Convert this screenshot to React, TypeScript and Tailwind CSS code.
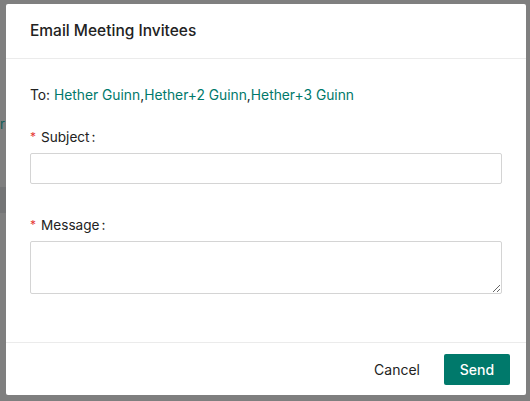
export default function App() {
  const invitees = ['Hether Guinn', 'Hether+2 Guinn', 'Hether+3 Guinn']

  return (
    <div className="relative h-[401px] w-[530px] overflow-hidden bg-[#7f7f7f] font-['Inter',sans-serif]">
      {/* page content peeking out from behind the overlay */}
      <span className="absolute left-0 top-[114px] text-[13px] leading-[20px] text-[#0b5c56]">r</span>
      <div className="absolute left-0 top-[187px] h-[26px] w-[6px] bg-[#747576]" />

      <div className="absolute left-[6px] top-[4px] flex h-[391px] w-[520px] flex-col rounded-[2px] bg-white">
        <div className="flex h-[55px] shrink-0 items-center border-b border-[#ebebeb] px-6">
          <h2 className="text-[15.5px] font-medium text-[#222]">Email Meeting Invitees</h2>
        </div>

        <div className="flex-1 px-6 pt-[26px]">
          <p className="text-[13.8px] leading-[20px] text-[#222]">
            To:{' '}
            {invitees.map((name, i) => (
              <span key={name} className="text-[#00796b]">
                {name}
                {i < invitees.length - 1 && <span className="text-[#222]">,</span>}
              </span>
            ))}
          </p>

          <div className="mt-[22px]">
            <label className="flex items-center text-[13.6px] leading-[20px] text-[#222]">
              <span className="mr-[5px] text-[12px] text-[#e53935]">*</span>
              Subject<span className="ml-[2px]">:</span>
            </label>
            <input
              type="text"
              className="mt-[6px] block h-[31px] w-full rounded-[2px] border border-[#d4d4d4] px-2 text-[14px] outline-none"
            />
          </div>

          <div className="mt-[31px]">
            <label className="flex items-center text-[13.6px] leading-[20px] text-[#222]">
              <span className="mr-[5px] text-[12px] text-[#e53935]">*</span>
              Message<span className="ml-[2px]">:</span>
            </label>
            <textarea className="mt-[6px] block h-[53px] w-full rounded-[2px] border border-[#d4d4d4] px-2 py-1 text-[14px] outline-none" />
          </div>
        </div>

        <div className="flex h-[53px] shrink-0 items-center justify-end gap-6 border-t border-[#ebebeb] px-4">
          <button className="text-[14px] text-[#222]">Cancel</button>
          <button className="h-[31px] w-[66px] rounded-[2px] bg-[#00796b] text-[14px] font-medium text-white">
            Send
          </button>
        </div>
      </div>
    </div>
  )
}
